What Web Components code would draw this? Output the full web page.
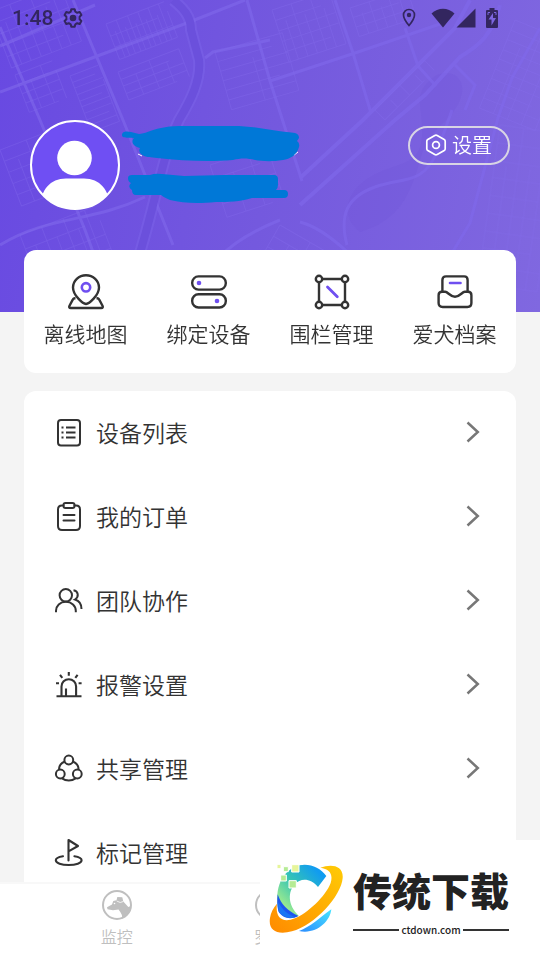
<!DOCTYPE html>
<html lang="zh-CN">
<head>
<meta charset="utf-8">
<meta name="viewport" content="width=device-width, initial-scale=1">
<title>我的</title>
<style>
  html, body {
    margin: 0;
    height: 100%;
  }
  body {
    background: #f4f4f4;
    color: #333;
    font-family: "Noto Sans CJK SC", sans-serif;
    font-weight: 350;
  }
</style>
</head>
<body>
<my-page>
  <status-bar slot="header">1:48</status-bar>
  <user-profile slot="header">设置</user-profile>

  <short-cut slot="shortcuts" icon="map">离线地图</short-cut>
  <short-cut slot="shortcuts" icon="device">绑定设备</short-cut>
  <short-cut slot="shortcuts" icon="fence">围栏管理</short-cut>
  <short-cut slot="shortcuts" icon="archive">爱犬档案</short-cut>

  <menu-row icon="list">设备列表</menu-row>
  <menu-row icon="order">我的订单</menu-row>
  <menu-row icon="team">团队协作</menu-row>
  <menu-row icon="alarm">报警设置</menu-row>
  <menu-row icon="share">共享管理</menu-row>
  <menu-row icon="flag">标记管理</menu-row>

  <tab-item slot="tabs" icon="dog">监控</tab-item>
  <tab-item slot="tabs" icon="compass">罗盘</tab-item>

  <site-mark slot="mark">传统下载<span slot="domain">ctdown.com</span></site-mark>
</my-page>

<script>
const icons = {
  // status bar
  gear: [20, 20, `<path d="M8.3 1.2h3.4l.6 2.5 1.9 1.1 2.5-.8 1.7 3-1.8 1.8v2.4l1.8 1.8-1.7 3-2.5-.8-1.9 1.1-.6 2.5H8.3l-.6-2.5-1.9-1.1-2.5.8-1.7-3 1.8-1.8V8.800L1.600 7l1.700-3 2.500.8 1.900-1.100z" fill="none" stroke="currentColor" stroke-width="2" stroke-linejoin="round"/><circle cx="10" cy="10" r="3.300" fill="currentColor"/>`],
  place: [14, 20, `<path d="M7 1.500c-3.300 0-5.500 2.500-5.500 5.500C1.500 11 7 17.500 7 17.500s5.500-6.500 5.500-10.500c0-3-2.200-5.500-5.500-5.500z" fill="none" stroke="currentColor" stroke-width="1.700"/><circle cx="7" cy="7" r="2.200" fill="currentColor"/>`],
  wifi: [24, 20, `<path d="M12 19.500.5 5.500C7-.8 17-.8 23.500 5.500z" fill="currentColor"/>`],
  signal: [20, 20, `<path d="M.5 19.500h19V.5z" fill="currentColor"/>`],
  battery: [12, 20, `<path d="M3.500 0h5v2H11q1 0 1 1v16q0 1-1 1H1q-1 0-1-1V3q0-1 1-1h2.500z" fill="currentColor"/><path d="M7 5 2.500 11.500H5.500V17.500L10 10H7z" fill="#7d66e0"/><path d="M2 7V4.500h2M10 7V4.500H8" fill="none" stroke="#7d66e0"/>`],
  // profile button
  hex: [22, 22, `<path d="M9.800 1.500q1.200-.7 2.400 0l7 4q1 .6 1 1.800v7.400q0 1.200-1 1.800l-7 4q-1.200.7-2.400 0l-7-4q-1-.6-1-1.800V7.300q0-1.200 1-1.800z" fill="none" stroke="currentColor" stroke-width="1.700"/><circle cx="11" cy="11" r="3.400" fill="none" stroke="currentColor" stroke-width="1.700"/>`],
  // shortcuts
  map: [36, 36, `<g fill="none" stroke="currentColor" stroke-width="2.400" stroke-linejoin="round"><path d="M18 30C15 29.800 5 21.500 5 13.500a13 12.300 0 0 1 26 0C31 21.500 21 29.800 18 30z"/><path d="M7.500 24.200H6.800q-1.300 0-1.900 1.200l-3.400 6.300q-1 2.300 1.200 2.300h30.600q2.200 0 1.200-2.300l-3.400-6.300q-.6-1.200-1.900-1.200h-.7"/></g><circle cx="18" cy="13.300" r="4.200" fill="none" stroke="#6f4ff0" stroke-width="2.600"/>`],
  device: [36, 36, `<g fill="none" stroke="currentColor" stroke-width="2.400"><rect x="1.200" y="2.400" width="33.600" height="13.200" rx="6.300"/><rect x="1.200" y="20.300" width="33.600" height="13.200" rx="6.300"/></g><circle cx="8" cy="9" r="2.300" fill="#6f4ff0"/><circle cx="26" cy="27" r="2.300" fill="#6f4ff0"/>`],
  fence: [36, 36, `<g fill="#fff" stroke="currentColor" stroke-width="2.400"><path d="M5 5h26v26H5z"/><circle cx="5" cy="5" r="3.200"/><circle cx="31" cy="5" r="3.200"/><circle cx="5" cy="31" r="3.200"/><circle cx="31" cy="31" r="3.200"/></g><path d="m13.500 13 9.800 9.800" stroke="#6f4ff0" stroke-width="2.800" stroke-linecap="round"/>`],
  archive: [36, 36, `<g fill="none" stroke="currentColor" stroke-width="2.400" stroke-linejoin="round"><path d="M5.400 17.500V6q0-3.600 3.600-3.600h18.200Q30.600 2.400 30.600 6v11.500"/><path d="M5 17.800h3.200c2.800 0 4.800 4.900 9.800 4.900s7-4.900 9.800-4.900H31q3.400 0 3.400 3.400V29q0 4-4 4H5.600q-4 0-4-4v-7.800Q1.600 17.800 5 17.800z"/></g><path d="M13 9h10.500" stroke="#6f4ff0" stroke-width="2.600" stroke-linecap="round"/>`],
  // menu
  list: [30, 28, `<rect x="4" y="2" width="22" height="25.500" rx="3" fill="none" stroke="currentColor" stroke-width="2"/><path d="M12 9.500h9.500M12 14.500h9.500M12 19.500h9.500" stroke="currentColor" stroke-width="2"/><path d="M7.500 9.500h2M7.500 14.500h2M7.500 19.500h2" stroke="currentColor" stroke-width="2"/>`],
  order: [30, 28, `<g fill="none" stroke="currentColor" stroke-width="2" stroke-linecap="round"><path d="M9.500 3.500H8q-4 0-4 4V24q0 4 4 4h14q4 0 4-4V7.500q0-4-4-4h-1.500"/><rect x="9.500" y="1" width="11" height="5" rx="2"/><path d="M9.500 13h11M9.500 18.500h11"/></g>`],
  team: [30, 28, `<g fill="none" stroke="currentColor" stroke-width="2"><circle cx="11.800" cy="9.300" r="6.200"/><path d="M2 26.300v-1.500c0-5 4-9 9.800-9s10 4 10 9v1.500M19.500 4.300c5 .7 5.700 6.700 1.500 9.200 4 1.200 6.500 4.500 6.500 9.500"/></g>`],
  alarm: [30, 28, `<g fill="none" stroke="currentColor" stroke-width="2.100"><path d="M2.500 26.200h25M7.500 26V16.500a7.300 7.300 0 0 1 14.600 0V26M12 26v-7.500"/><path d="M14.800 5.800V2M8.300 7.800 6 4.800M21.300 7.800l2.300-3M5 13.200H2M24.600 13.200h3"/></g>`],
  share: [30, 28, `<g fill="none" stroke="currentColor" stroke-width="2"><circle cx="14.800" cy="6" r="4.400"/><circle cx="6.300" cy="20" r="4.400"/><circle cx="23.300" cy="20" r="4.400"/><path d="M10.800 7.500C7 9 5 12 5 15.500M18.800 7.500C22.600 9 24.600 12 24.600 15.500M8 24.400c4 2.800 9.600 2.800 13.600 0"/></g>`],
  flag: [30, 28, `<g fill="none" stroke="currentColor" stroke-width="2.100" stroke-linejoin="round" stroke-linecap="round"><path d="M14.500 22.500V2l9.500 6-9.500 5.300"/><path d="M9 18.200c-4.500.8-7.200 2.200-7.200 4 0 2.800 5.700 4.800 12.900 4.800s12.900-2 12.900-4.800c0-1.800-2.700-3.200-7.200-4"/></g>`],
  arrow: [14, 24, `<path d="m1.500 2.500 10.300 9.500-10.300 9.500" fill="none" stroke="#777" stroke-width="2.500"/>`],
  // tabs
  dog: [30, 30, `<circle cx="15" cy="15" r="14" fill="none" stroke="currentColor" stroke-width="2"/><path d="M5 17.300 10 14.500 11.300 11l3.200-.7L15.300 7l5 .3 1 4.200 5 5.500 2.500-1q-.5 8-8.500 12.500.3-3.500-2-6.500l-1.800-2.500-5.500.8-5.500-1z" fill="currentColor"/><path d="m14.700 11 3.500 1.500 3-1" fill="none" stroke="#fff" stroke-width=".8"/><circle cx="12.500" cy="13.500" r=".8" fill="#fff"/>`],
  compass: [30, 30, `<circle cx="15" cy="15" r="14" fill="none" stroke="currentColor" stroke-width="2"/><path d="m21 9-3.500 8.500L9 21l3.500-8.500z" fill="currentColor"/>`],
};

class AppIcon extends HTMLElement {
  static get observedAttributes() {
    return ['name'];
  }

  constructor() {
    super();
    this.attachShadow({ mode: 'open' });
  }

  attributeChangedCallback(attr, old, name) {
    const [w, h, shape] = icons[name];
    this.shadowRoot.innerHTML = `
      <style>
        :host { display: block; flex: none; }
        svg { display: block; overflow: visible; }
      </style>
      <svg width="${w}" height="${h}" viewBox="0 0 ${w} ${h}" aria-hidden="true">${shape}</svg>
    `;
  }
}

customElements.define('app-icon', AppIcon);

const define = (name, html, setup) => {
  const template = document.createElement('template');
  template.innerHTML = html;
  customElements.define(name, class extends HTMLElement {
    constructor() {
      super();
      this.attachShadow({ mode: 'open' }).appendChild(template.content.cloneNode(true));
    }

    connectedCallback() {
      if (setup) setup(this, this.shadowRoot);
    }
  });
};

const passIcon = (host, root) => {
  root.querySelector('.icon').setAttribute('name', host.getAttribute('icon'));
};

// parallel streets and their cross streets inside a slanted block
const block = (x, y, w, h, angle, rows, cols) => {
  let d = '';
  for (let i = 0; i <= rows; i++) {
    d += `M0 ${Math.round((h * i) / rows)}h${i % 3 === 1 ? Math.round(w * 0.8) : w}`;
  }
  for (let i = 0; i <= cols; i++) {
    d += `M${Math.round((w * i) / cols)} ${i % 2 ? Math.round(h / 4) : 0}V${h}`;
  }
  return `<path transform="translate(${x} ${y}) rotate(${angle})" d="${d}"/>`;
};

define('map-backdrop', `
<style>
  :host {
    display: block;
    background: linear-gradient(100deg, #6849e2, #7459de 50%, #8068e0);
  }
  svg { display: block; width: 100%; height: 100%; }
</style>
<svg viewBox="0 0 540 312" preserveAspectRatio="xMidYMid slice" fill="none" aria-hidden="true">
  <path d="M430 80c15-15 40-5 30 20s-30 25-40 60-20 60-60 72c-20-15-15-40 10-55s50-10 52-40-10-40 8-57z" fill="#6e55d8" opacity=".25"/>
  <g class="minor" stroke="#8a72f0" opacity=".3"></g>
  <g stroke="#8069ec" stroke-width="3" opacity=".6">
    <path d="M0 92 100 55 187 23 245 0M0 27l40 93 45 110 30 82M73 0l50 120 50 125M0 46 95 5"/>
    <path d="M247 0l23 81 32 100M270 81l85-28 85-29M335 0l18 53 18 60M405 28l13 38 18 20"/>
    <path d="M300 178 363 120l92-92 15-28M300 205l95-85 30-25 35-38c20-12 32-22 40-52" stroke-width="4"/>
    <path d="M540 28l-28 50-14 40-28 105-30 50-50 39M347 245c-8-30 0-48 28-58s48-2 62-35l15-42M300 222c20 5 40 22 60 42l60 48"/>
    <path d="M0 245c50-30 90-22 145-48M200 312c-5-40 25-70 80-92M205 58l8-6 57-12M455 65l20 20-10 25"/>
  </g>
  <path d="M173 0c10 8 18 16 18 30l8 30c2 20-8 40-20 60-20 40-26 110-60 192" stroke="#8069ec" stroke-width="12" opacity=".4"/>
  <path d="M173 0c10 8 18 16 18 30l8 30c2 20-8 40-20 60-20 40-26 110-60 192" stroke="#6b50dc" stroke-width="8"/>
</svg>
`, (host, root) => {
  root.querySelector('.minor').innerHTML = [
    block(-10, 12, 75, 60, -21, 5, 7),
    block(15, 75, 40, 40, -21, 4, 3),
    block(70, 76, 30, 60, -21, 9, 1),
    block(106, 24, 62, 38, -21, 3, 11),
    block(118, 72, 65, 30, -21, 4, 4),
    block(215, 52, 70, 60, -16, 6, 2),
    block(272, 10, 60, 55, -18, 5, 6),
    block(350, 8, 60, 30, -18, 3, 6),
    block(375, 110, 70, 14, -45, 1, 4),
    block(515, 20, 60, 95, 22, 9, 4),
    block(500, 125, 60, 160, 8, 9, 5),
    block(0, 150, 70, 60, -21, 5, 5),
    block(20, 235, 80, 60, -21, 4, 7),
    block(210, 165, 60, 55, -18, 4, 3),
    block(280, 225, 70, 50, 30, 4, 4),
  ].join('');
});

define('status-bar', `
<style>
  :host {
    display: flex;
    align-items: center;
    height: 36px;
    padding: 0 42px 0 12px;
    color: #33265f;
    font: 500 21px/36px Roboto, sans-serif;
  }
  .gear { margin-left: 10px; }
  .right { display: flex; align-items: center; gap: 10px; margin-left: auto; }
  .net { display: flex; gap: 1px; margin-left: 5px; }
</style>
<slot></slot>
<app-icon class="gear" name="gear"></app-icon>
<div class="right">
  <app-icon name="place"></app-icon>
  <div class="net">
    <app-icon name="wifi"></app-icon>
    <app-icon name="signal"></app-icon>
  </div>
  <app-icon name="battery"></app-icon>
</div>
`);

define('user-profile', `
<style>
  :host {
    display: flex;
    align-items: flex-start;
    padding: 84px 30px 40px;
  }
  svg { display: block; flex: none; }
  button {
    display: flex;
    align-items: center;
    gap: 5px;
    height: 39px;
    margin: 6px 0 0 auto;
    padding: 0 16px 2px 15px;
    border: 2px solid #d8d4e4;
    border-radius: 20px;
    background: none;
    color: #fff;
    font: inherit;
    font-size: 20px;
    line-height: 30px;
    white-space: nowrap;
  }
</style>
<svg width="90" height="90" viewBox="0 0 90 90" role="img" aria-label="头像">
  <defs><clipPath id="round"><circle cx="45" cy="45" r="44"/></clipPath></defs>
  <circle cx="45" cy="45" r="44" fill="#6f4ff3"/>
  <g fill="#fff" clip-path="url(#round)">
    <circle cx="44.500" cy="38" r="17.300"/>
    <path d="M10 90c0-20 10-31.500 26-31.500h18C70 58.500 80 70 80 90z"/>
  </g>
  <circle cx="45" cy="45" r="44" fill="none" stroke="#fff" stroke-width="2"/>
</svg>
<svg width="180" height="90" viewBox="0 0 180 90" aria-hidden="true">
  <path d="M18 34l4 2M174 35l4-3M14 62l6-1" stroke="#fff"/>
  <g fill="#0078d7">
    <path d="M2 15c0-4 5-4 9-3l8 2c5 0 12-4 22-6q9-2.300 20-2h58c20 1 35 5 56 7q4 1 4 5l-2 3q3 2 2 6c-2 8-9 12-16 13-12 2-22 1-28 0-8-2-14-2-22 0-23 2-50 1-76-2-6-1-11 0-16-4q-3-3-1-6c-8-2-9-7-6-10-6-1-12 1-12-3z"/>
    <path d="M8 58q0-3 4-3h18q5-2 12-1l22 2 40-1h50q4 0 4 4v6q0 3-2 5h8q4 0 4 4t-4 4h-32c-12 4-24 4-36 4-20 2-33 1-46-2q-7-3-9-5H16q-4 0-4-5-5-3-1-7-3-1-3-5z"/>
  </g>
</svg>
<button type="button"><app-icon name="hex"></app-icon><slot></slot></button>
`);

define('short-cut', `
<style>
  :host { display: block; }
  a {
    display: flex;
    flex-direction: column;
    align-items: center;
    gap: 8px;
    color: inherit;
    font-size: 21px;
    line-height: 30px;
    text-decoration: none;
    white-space: nowrap;
  }
</style>
<a href="#"><app-icon class="icon"></app-icon><slot></slot></a>
`, passIcon);

define('menu-row', `
<style>
  :host { display: block; }
  a {
    display: flex;
    align-items: center;
    gap: 12px;
    box-sizing: border-box;
    height: 84px;
    padding: 0 36px 2px 30px;
    color: inherit;
    font-size: 23px;
    line-height: 34px;
    text-decoration: none;
    white-space: nowrap;
  }
  .arrow { margin-left: auto; }
</style>
<a href="#"><app-icon class="icon"></app-icon><slot></slot><app-icon class="arrow" name="arrow"></app-icon></a>
`, passIcon);

define('tab-item', `
<style>
  :host { display: block; }
  a {
    display: flex;
    flex-direction: column;
    align-items: center;
    gap: 4px;
    color: #bfbfbf;
    font-size: 16px;
    line-height: 24px;
    text-decoration: none;
  }
</style>
<a href="#"><app-icon class="icon"></app-icon><slot></slot></a>
`, passIcon);

define('site-mark', `
<style>
  :host {
    display: flex;
    align-items: center;
    gap: 8px;
    box-sizing: border-box;
    width: 280px;
    height: 120px;
    padding: 0 8px 4px;
    background: #fff;
    color: #222;
  }
  svg { display: block; flex: none; }
  .name {
    font-size: 39px;
    font-weight: 900;
    line-height: 64px;
    white-space: nowrap;
  }
  .domain {
    display: flex;
    align-items: center;
    gap: 2px;
    font-size: 10px;
    font-weight: 500;
    line-height: 18px;
  }
  .domain::before, .domain::after {
    content: "";
    flex: 1;
    height: 2px;
    background: #333;
  }
</style>
<svg width="77" height="71" viewBox="40 88 231 213" aria-hidden="true">
  <defs>
    <linearGradient id="c" x1="0" y1="1" x2="1" y2="0"><stop offset=".15" stop-color="#a5ee8b"/><stop offset=".5" stop-color="#35c4b4"/><stop offset=".85" stop-color="#119cf0"/></linearGradient>
    <linearGradient id="o" x1="1" y1="0" x2="0" y2="1"><stop offset="0" stop-color="#ffcb05"/><stop offset="1" stop-color="#ff8a00"/></linearGradient>
    <linearGradient id="t" x1="0" y1="1" x2="1" y2="0"><stop offset="0" stop-color="#2b8cff"/><stop offset="1" stop-color="#48e4ff"/></linearGradient>
  </defs>
  <path d="M134 95c32-6 62 6 81 32l-25 33c-22-27-52-28-70-8-20 22-22 62 12 94-22 12-45 6-60-14-12-50-2-118 62-137z" fill="url(#c)"/>
  <path d="M69 182c10 30 30 50 62 65-22 12-47 8-60-14-4-18-4-34-2-51z" fill="#1d55ee"/>
  <path d="M70 205c14 24 28 36 52 46-20 6-38 0-50-18z" fill="#1a8cf8" opacity=".6"/>
  <path d="M230 227c-4 38-46 76-97 65 34-12 60-38 97-65z" fill="url(#t)"/>
  <path d="M197 102c32-12 70-8 67 31-4 54-84 142-152 160-44 12-72-2-66-40 2-16 10-30 21-43-6 40 14 60 54 44 36-14 92-66 107-106 8-28-4-42-31-46z" fill="url(#o)"/>
  <g stroke="#fff" stroke-width="3">
    <path d="M111 93h22v22h-22z" fill="#e6f59a"/>
    <path d="M86 99h15v15H86z" fill="#b5eb94"/>
    <path d="M78 124h17v18H78z" fill="#b5eb94"/>
    <path d="M103 141h22v22h-22z" fill="#b5eb94"/>
    <path d="M67 92h12v13H67z" fill="#e6f59a"/>
  </g>
</svg>
<div>
  <div class="name"><slot></slot></div>
  <div class="domain"><slot name="domain"></slot></div>
</div>
`);

define('my-page', `
<style>
  :host {
    position: relative;
    display: flex;
    flex-direction: column;
    height: 100vh;
    overflow: hidden;
  }
  main { flex: 1; min-height: 0; overflow: hidden; }
  header { position: relative; height: 312px; }
  map-backdrop { position: absolute; inset: 0; }
  .front { position: relative; }
  .card {
    margin: 0 24px 18px;
    border-radius: 12px;
    background: #fff;
  }
  .shortcuts {
    position: relative;
    display: grid;
    grid-template-columns: repeat(4, 1fr);
    margin-top: -62px;
    padding: 24px 0 25px;
  }
  footer {
    display: grid;
    grid-template-columns: repeat(3, 1fr);
    padding: 6px 40px 12px;
    border-top: 2px solid #f8f8f8;
    background: #fff;
  }
  .mark { position: absolute; right: 0; bottom: 0; }
</style>
<main>
  <header>
    <map-backdrop></map-backdrop>
    <div class="front"><slot name="header"></slot></div>
  </header>
  <section class="card shortcuts"><slot name="shortcuts"></slot></section>
  <nav class="card"><slot></slot></nav>
</main>
<footer><slot name="tabs"></slot></footer>
<div class="mark"><slot name="mark"></slot></div>
`);
</script>
</body>
</html>
